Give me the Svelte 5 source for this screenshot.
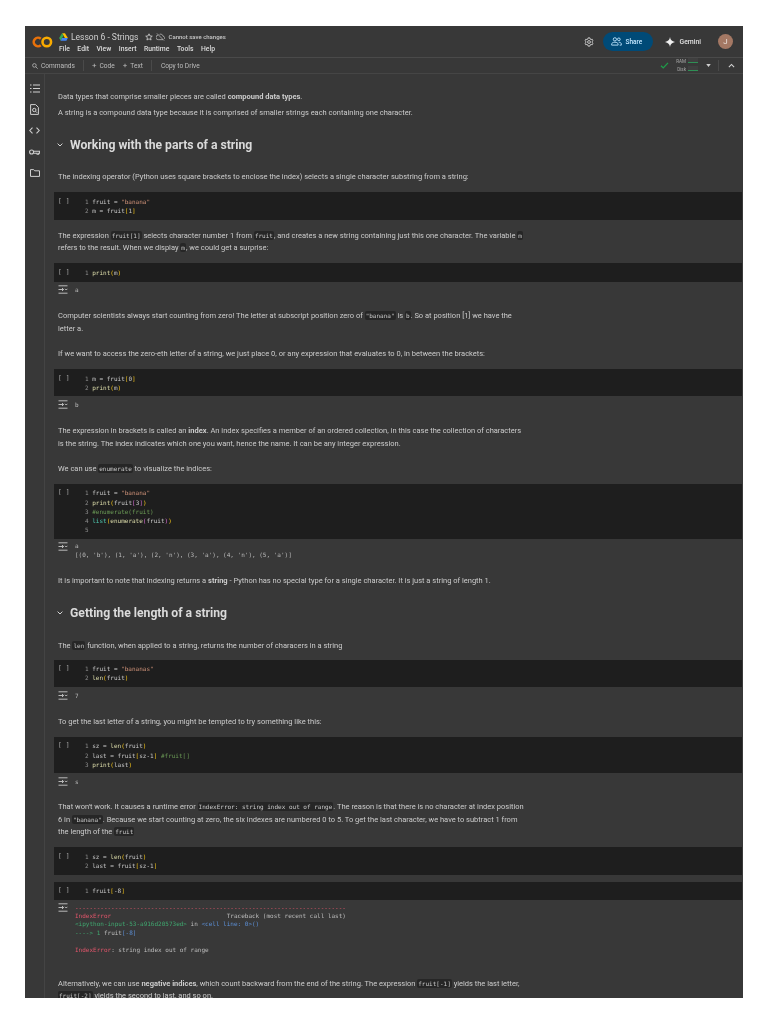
<script>
  const menus = ['File', 'Edit', 'View', 'Insert', 'Runtime', 'Tools', 'Help'];
</script>

{#snippet run()}
  <span class="run">[ ]</span>
{/snippet}

{#snippet outIcon()}
  <svg class="out-icon" viewBox="0 0 10 9" width="10" height="9" fill="none" stroke="#c8c8c8" stroke-width="0.9">
    <path d="M0.5 0.8h9M0.5 8.2h9M0.5 4.5h5M4 3l1.6 1.5L4 6" />
    <path d="M7 3.8l1.2 1.2 1.2-1.2" />
  </svg>
{/snippet}

<div class="window">
  <header class="topbar">
    <svg class="logo" viewBox="0 0 24 14" width="21" height="12" fill="none" stroke-width="3">
      <path d="M10 3.2a5 5 0 1 0 0 7.6" stroke="#e8710a" />
      <circle cx="17" cy="7" r="5" stroke="#f9ab00" />
    </svg>
    <div class="doc">
      <div class="doc-title">
        <svg viewBox="0 0 12 11" width="9" height="8">
          <path d="M4 0.5h4l4 6.5h-4z" fill="#fbbc04" />
          <path d="M4 0.5L0 7l2 3.5L6 3.8z" fill="#34a853" />
          <path d="M2 10.5h8L12 7H4z" fill="#4285f4" />
        </svg>
        <span class="name">Lesson 6 - Strings</span>
        <svg class="star" viewBox="0 0 10 10" width="8" height="8" fill="none" stroke="#d5d5d5" stroke-width="1">
          <path d="M5 1l1.2 2.7 2.9.3-2.2 1.9.7 2.9L5 7.3 2.4 8.8l.7-2.9L.9 4l2.9-.3z" />
        </svg>
        <svg viewBox="0 0 10 9" width="9" height="8" fill="none" stroke="#c8c8c8" stroke-width="0.8">
          <path d="M2.4 2.4A2.3 2.3 0 0 0 2.5 7.5h5.4M4 1.500a3 3 0 0 1 4 2.200 1.800 1.800 0 0 1 1.300 3M1 0.500l8 8" />
        </svg>
        <span class="unsaved">Cannot save changes</span>
      </div>
      <nav class="menus">
        {#each menus as m}<span>{m}</span>{/each}
      </nav>
    </div>
    <div class="actions">
      <svg viewBox="0 0 12 12" width="10" height="10" fill="none" stroke="#d0d0d0" stroke-width="1.1">
        <circle cx="6" cy="6" r="1.7" />
        <path d="M5 1h2l.3 1.4 1.2.7 1.3-.5 1 1.8-1 .9v1.4l1 .9-1 1.8-1.3-.5-1.2.7L7 11H5l-.3-1.4-1.2-.7-1.3.5-1-1.8 1-.9V5.3l-1-.9 1-1.8 1.3.5 1.2-.7z" />
      </svg>
      <button class="share">
        <svg viewBox="0 0 12 10" width="11" height="9" fill="none" stroke="#c2e7ff" stroke-width="1">
          <circle cx="4.2" cy="2.6" r="1.8" />
          <circle cx="8.6" cy="2.6" r="1.5" />
          <path d="M0.6 9v-1c0-1.4 1.6-2.2 3.6-2.2S7.8 6.600 7.800 8v1zM8.500 5.800c1.700 0 2.900.8 2.900 2.200v1H9.500" />
        </svg>
        Share
      </button>
      <span class="gemini">
        <svg viewBox="0 0 10 10" width="10" height="10"><path d="M5 0c.4 2.800 1.800 4.400 5 5-3.200.6-4.600 2.200-5 5-.4-2.800-1.800-4.400-5-5 3.200-.6 4.600-2.200 5-5z" fill="#f0f0f0" /></svg>
        Gemini
      </span>
      <span class="avatar">J</span>
    </div>
  </header>

  <div class="toolbar">
    <span class="tool first">
      <svg viewBox="0 0 8 8" width="6" height="6" fill="none" stroke="#c0c0c0" stroke-width="1"><circle cx="3.200" cy="3.200" r="2.400" /><path d="M5 5l2.600 2.600" /></svg>
      Commands
    </span>
    <i class="sep"></i>
    <span class="tool"><b>+</b> Code</span>
    <span class="tool"><b>+</b> Text</span>
    <i class="sep"></i>
    <span class="tool drive">Copy to Drive</span>
    <div class="status">
      <svg viewBox="0 0 10 8" width="9" height="7" fill="none" stroke="#1e9e4a" stroke-width="1.500"><path d="M1 4.200l2.600 2.500L9 1" /></svg>
      <div class="meters">
        <span>RAM</span><i></i>
        <span>Disk</span><i></i>
      </div>
      <svg class="caret" viewBox="0 0 6 4" width="5" height="3"><path d="M0 0h6L3 4z" fill="#d0d0d0" /></svg>
      <i class="sep"></i>
      <svg viewBox="0 0 8 5" width="7" height="5" fill="none" stroke="#d5d5d5" stroke-width="1.200"><path d="M1 4.300l3-3 3 3" /></svg>
    </div>
  </div>

  <div class="body">
    <aside class="rail">
      <svg viewBox="0 0 10 9" width="10" height="9" fill="none" stroke="#cfcfcf" stroke-width="1.200">
        <path d="M0 1h1.500M3 1h7M0 4.500h1.500M3 4.500h7M0 8h1.500M3 8h7" />
      </svg>
      <svg viewBox="0 0 9 11" width="9" height="11" fill="none" stroke="#cfcfcf" stroke-width="1">
        <path d="M.6.6h5l2.800 2.800v7H.6z" /><circle cx="4.300" cy="6" r="1.700" /><path d="M5.500 7.200l1.500 1.500" />
      </svg>
      <svg viewBox="0 0 11 7" width="11" height="7" fill="none" stroke="#cfcfcf" stroke-width="1.100">
        <path d="M3.500.6L.8 3.500l2.700 2.900M7.500.6l2.700 2.900-2.700 2.900" />
      </svg>
      <svg viewBox="0 0 11 6" width="11" height="6" fill="none" stroke="#cfcfcf" stroke-width="1.100">
        <circle cx="2.600" cy="3" r="2" /><path d="M4.600 2.200h6v2h-1v1h-1.500v-1H4.600" />
      </svg>
      <svg viewBox="0 0 10 8" width="10" height="8" fill="none" stroke="#cfcfcf" stroke-width="1">
        <path d="M.5.600h3.200l1 1.200h4.800v5.600H.5z" />
      </svg>
    </aside>

    <main class="notebook">
      <p class="md intro">Data types that comprise smaller pieces are called <b>compound data types</b>.</p>
      <p class="md second">A string is a compound data type because it is comprised of smaller strings each containing one character.</p>

      <h2 class="section"><svg viewBox="0 0 6 4" width="6" height="4" fill="none" stroke="#d5d5d5" stroke-width="1"><path d="M.6.600L3 3l2.400-2.400" /></svg>Working with the parts of a string</h2>

      <p class="md after-head">The indexing operator (Python uses square brackets to enclose the index) selects a single character substring from a string:</p>

      <div class="cell">
        {@render run()}
        <pre><i>1</i> fruit = <s>"banana"</s>
<i>2</i> m = fruit<u>[</u>1<u>]</u></pre>
      </div>

      <p class="md">The expression <code>fruit[1]</code> selects character number 1 from <code>fruit</code>, and creates a new string containing just this one character. The variable <code>m</code><br />refers to the result. When we display <code>m</code>, we could get a surprise:</p>

      <div class="cell">
        {@render run()}
        <pre><i>1</i> <em>print</em><u>(</u>m<u>)</u></pre>
      </div>
      <div class="output">{@render outIcon()}<pre>a</pre></div>

      <p class="md">Computer scientists always start counting from zero! The letter at subscript position zero of <code>"banana"</code> is <code>b</code>. So at position [1] we have the<br />letter a.</p>

      <p class="md">If we want to access the zero-eth letter of a string, we just place 0, or any expression that evaluates to 0, in between the brackets:</p>

      <div class="cell">
        {@render run()}
        <pre><i>1</i> m = fruit<u>[</u>0<u>]</u>
<i>2</i> <em>print</em><u>(</u>m<u>)</u></pre>
      </div>
      <div class="output">{@render outIcon()}<pre>b</pre></div>

      <p class="md">The expression in brackets is called an <b>index</b>. An index specifies a member of an ordered collection, in this case the collection of characters<br />is the string. The index indicates which one you want, hence the name. It can be any integer expression.</p>

      <p class="md">We can use <code>enumerate</code> to visualize the indices:</p>

      <div class="cell">
        {@render run()}
        <pre><i>1</i> fruit = <s>"banana"</s>
<i>2</i> <em>print</em><u>(</u>fruit<var>[</var>3<var>]</var><u>)</u>
<i>3</i> <small>#enumerate(fruit)</small>
<i>4</i> <kbd>list</kbd><u>(</u><em>enumerate</em><var>(</var>fruit<var>)</var><u>)</u>
<i>5</i></pre>
      </div>
      <div class="output">{@render outIcon()}<pre class="tight">a
[(0, 'b'), (1, 'a'), (2, 'n'), (3, 'a'), (4, 'n'), (5, 'a')]</pre></div>

      <p class="md">It is important to note that indexing returns a <b>string</b> - Python has no special type for a single character. It is just a string of length 1.</p>

      <h2 class="section second-head"><svg viewBox="0 0 6 4" width="6" height="4" fill="none" stroke="#d5d5d5" stroke-width="1"><path d="M.6.600L3 3l2.400-2.400" /></svg>Getting the length of a string</h2>

      <p class="md after-head">The <code>len</code> function, when applied to a string, returns the number of characers in a string</p>

      <div class="cell close">
        {@render run()}
        <pre><i>1</i> fruit = <s>"bananas"</s>
<i>2</i> <em>len</em><u>(</u>fruit<u>)</u></pre>
      </div>
      <div class="output">{@render outIcon()}<pre>7</pre></div>

      <p class="md">To get the last letter of a string, you might be tempted to try something like this:</p>

      <div class="cell">
        {@render run()}
        <pre><i>1</i> sz = <em>len</em><u>(</u>fruit<u>)</u>
<i>2</i> last = fruit<u>[</u>sz-1<u>]</u> <small>#fruit[]</small>
<i>3</i> <em>print</em><u>(</u>last<u>)</u></pre>
      </div>
      <div class="output">{@render outIcon()}<pre>s</pre></div>

      <p class="md pull">That won't work. It causes a runtime error <code>IndexError: string index out of range</code>. The reason is that there is no character at index position<br />6 in <code>"banana"</code>. Because we start counting at zero, the six indexes are numbered 0 to 5. To get the last character, we have to subtract 1 from<br />the length of the <code>fruit</code></p>

      <div class="cell">
        {@render run()}
        <pre><i>1</i> sz = <em>len</em><u>(</u>fruit<u>)</u>
<i>2</i> last = fruit<u>[</u>sz-1<u>]</u></pre>
      </div>

      <div class="cell next">
        {@render run()}
        <pre><i>1</i> fruit<u>[</u>-8<u>]</u></pre>
      </div>
      <div class="output trace">{@render outIcon()}<pre><span class="red">---------------------------------------------------------------------------</span>
<span class="red">IndexError</span>                                Traceback (most recent call last)
<span class="green">&lt;ipython-input-53-a916d20573ed&gt;</span> in <span class="blue">&lt;cell line: 0&gt;()</span>
<span class="green">----&gt; 1</span> fruit<span class="blue">[-8]</span>

<span class="red">IndexError</span>: string index out of range</pre></div>

      <p class="md last">Alternatively, we can use <b>negative indices</b>, which count backward from the end of the string. The expression <code>fruit[-1]</code> yields the last letter,<br /><code>fruit[-2]</code> yields the second to last, and so on.</p>
    </main>
  </div>
</div>

<style>
  :global(body) {
    background: #fff;
  }

  .window {
    box-sizing: border-box;
    width: 718px;
    height: 972px;
    margin: 26px 25px;
    background: #383838;
    color: #cccccc;
    font-family: Roboto, "Liberation Sans", sans-serif;
    overflow: hidden;
    display: flex;
    flex-direction: column;
    filter: blur(0.5px);
  }

  .topbar {
    height: 32px;
    flex: none;
    box-sizing: border-box;
    display: flex;
    align-items: center;
    padding: 0 10px 0 7px;
    border-bottom: 1px solid #4a4a4a;
  }

  .doc {
    margin-left: 6px;
    display: flex;
    flex-direction: column;
    gap: 3px;
    padding-top: 1px;
  }

  .doc-title {
    display: flex;
    align-items: center;
    height: 11px;
    gap: 3px;
  }

  .name {
    font-size: 8.500px;
    color: #cfcfcf;
    margin-right: 4px;
  }

  .unsaved {
    font-size: 6px;
    font-weight: 500;
    color: #c8c8c8;
  }

  .menus {
    display: flex;
    gap: 7.500px;
    font-size: 6.800px;
    font-weight: 500;
    color: #dcdcdc;
  }

  .actions {
    margin-left: auto;
    display: flex;
    align-items: center;
  }

  .share {
    display: flex;
    align-items: center;
    gap: 4px;
    height: 19px;
    width: 50px;
    margin-left: 9px;
    padding: 0 0 0 8px;
    border: 0;
    border-radius: 10px;
    background: #004a77;
    color: #c2e7ff;
    font: 500 6.500px Roboto, sans-serif;
  }

  .gemini {
    display: flex;
    align-items: center;
    gap: 5px;
    margin-left: 12px;
    font-size: 6.800px;
    font-weight: 500;
    color: #e0e0e0;
  }

  .avatar {
    width: 15px;
    height: 15px;
    margin-left: 17px;
    border-radius: 50%;
    background: #a47864;
    color: #efe6e0;
    font-size: 8px;
    display: grid;
    place-items: center;
  }

  .toolbar {
    height: 16px;
    flex: none;
    box-sizing: border-box;
    display: flex;
    align-items: center;
    padding-left: 7px;
    font-size: 6.600px;
    color: #bdbdbd;
    border-bottom: 1px solid #454545;
  }

  .tool {
    display: flex;
    align-items: center;
    gap: 3px;
    margin-right: 8px;
  }

  .tool b {
    font-weight: 400;
    font-size: 8px;
    line-height: 1;
  }

  .tool.drive {
    margin-left: 1px;
  }

  .sep {
    width: 1px;
    height: 11px;
    background: #4a4a4a;
    margin-right: 8px;
  }

  .status {
    margin-left: auto;
    display: flex;
    align-items: center;
    padding-right: 8px;
  }

  .meters {
    display: grid;
    grid-template-columns: 17px 10px;
    column-gap: 2px;
    font-size: 4.600px;
    line-height: 7.500px;
    text-align: right;
    color: #a8a8a8;
  }

  .meters i {
    border-bottom: 1px solid #2f8f55;
    height: 4px;
    background: #3f3f3f;
  }

  .caret {
    margin: 0 7px 0 8px;
  }

  .status .sep {
    margin-right: 9px;
  }

  .body {
    flex: 1;
    min-height: 0;
    display: flex;
  }

  .rail {
    width: 20px;
    flex: none;
    box-sizing: border-box;
    border-right: 1px solid #444;
    display: grid;
    grid-auto-rows: 21px;
    justify-items: center;
    align-items: center;
    padding-top: 4px;
  }

  .notebook {
    flex: 1;
    min-width: 0;
    padding: 17px 1px 0 9px;
    font-size: 7.500px;
    line-height: 12.600px;
  }

  .md {
    margin: 12.500px 0 0;
    padding-left: 4px;
    white-space: nowrap;
  }

  .md.intro {
    margin-top: 0;
  }

  .md.second {
    margin-top: 3.500px;
  }

  .md.after-head {
    margin-top: 18.500px;
  }

  .md b {
    font-weight: 700;
  }

  .cell + .md {
    margin-top: 10px;
  }

  .output + .md {
    margin-top: 16px;
  }

  .output + .md.pull {
    margin-top: 15px;
  }

  .md.last {
    margin-top: 22px;
  }

  .section {
    display: flex;
    align-items: center;
    gap: 7px;
    margin: 17px 0 0 3px;
    font-size: 12.200px;
    line-height: 16px;
    font-weight: 700;
    color: #dadada;
  }

  .second-head {
    margin-top: 17px;
  }

  code,
  pre {
    font-family: "DejaVu Sans Mono", "Liberation Mono", monospace;
    font-size: 6px;
  }

  code {
    background: #262626;
    padding: 1px;
    border-radius: 2px;
    color: #c8c8c8;
  }

  .cell {
    display: flex;
    background: #1e1e1e;
    margin-top: 8.500px;
    padding: 4.500px 0;
  }

  .cell.close {
    margin-top: 7.500px;
  }

  .cell.next {
    margin-top: 7px;
  }

  .run {
    font: 6.500px/9px "DejaVu Sans Mono", monospace;
    color: #a8a8a8;
    width: 27px;
    padding-left: 4px;
    white-space: pre;
    flex: none;
  }

  pre {
    margin: 0;
    line-height: 9.200px;
    color: #c8c8c8;
  }

  pre i {
    font-style: normal;
    color: #8e8e8e;
  }

  pre s {
    text-decoration: none;
    color: #ce9178;
  }

  pre u {
    text-decoration: none;
    color: #f5c518;
  }

  pre em {
    font-style: normal;
    color: #dcdcaa;
  }

  pre var {
    font-style: normal;
    color: #da70d6;
  }

  pre small {
    font-size: inherit;
    color: #6a9955;
  }

  pre kbd {
    font: inherit;
    color: #4ec9b0;
  }

  .output {
    display: flex;
    padding: 3.500px 0 0 4px;
  }

  .out-icon {
    flex: none;
    margin-right: 7px;
  }

  .output pre {
    color: #bcbcbc;
  }

  .output pre.tight {
    line-height: 8.500px;
  }

  .output.trace {
    padding-top: 2.500px;
  }

  .trace pre {
    line-height: 8.400px;
    margin-top: 1px;
    height: 52px;
  }

  .red {
    color: #e0556a;
  }

  .green {
    color: #3fa76f;
  }

  .blue {
    color: #5c8fd6;
  }
</style>
